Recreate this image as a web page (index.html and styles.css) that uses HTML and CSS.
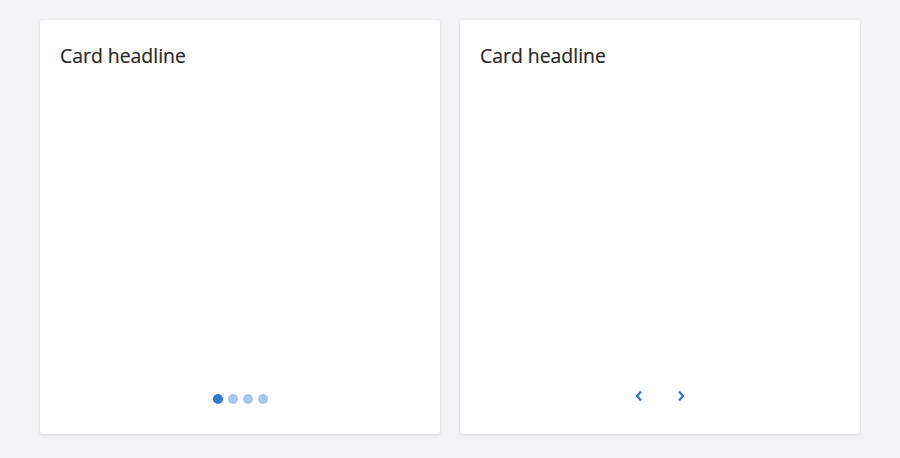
FILE: index.html
```html
<!DOCTYPE html>
<html>
<head>
<meta charset="utf-8">
<link rel="stylesheet" href="styles.css">
</head>
<body>
<div class="page">
  <div class="card">
    <h2 class="headline">Card headline</h2>
    <div class="footer">
      <div class="dots">
        <span class="dot active"></span>
        <span class="dot"></span>
        <span class="dot"></span>
        <span class="dot"></span>
      </div>
    </div>
  </div>
  <div class="card">
    <h2 class="headline">Card headline</h2>
    <div class="footer">
      <div class="arrows">
        <svg class="chev" width="8" height="12" viewBox="0 0 8 12"><path d="M6 1.5 L2 6 L6 10.5" fill="none" stroke="#2a7ad2" stroke-width="2.2"/></svg>
        <svg class="chev" width="8" height="12" viewBox="0 0 8 12"><path d="M2 1.5 L6 6 L2 10.5" fill="none" stroke="#2a7ad2" stroke-width="2.2"/></svg>
      </div>
    </div>
  </div>
</div>
</body>
</html>
```

FILE: styles.css
```css
html, body {
  margin: 0;
  padding: 0;
  background: #f3f3f5;
  font-family: "Open Sans", "Noto Sans", sans-serif;
}
.page {
  display: flex;
  gap: 20px;
  padding: 20px 40px;
}
.card {
  width: 400px;
  height: 414px;
  box-sizing: border-box;
  background: #fff;
  border-radius: 2px;
  box-shadow: 0 1px 3px rgba(0,0,0,0.12), 0 0 1px rgba(0,0,0,0.08);
  padding: 23px 20px 0;
  display: flex;
  flex-direction: column;
}
.headline {
  margin: 0;
  font-size: 19.4px;
  line-height: 26px;
  font-weight: 400;
  color: #2a2928;
  -webkit-text-stroke: 0.2px #2a2928;
}
.footer {
  margin-top: auto;
  display: flex;
  justify-content: center;
}
.dots {
  display: flex;
  gap: 5px;
  padding-bottom: 30px;
}
.dot {
  width: 10px;
  height: 10px;
  border-radius: 50%;
  background: #a4c6f0;
}
.dot.active {
  background: #2a7ad2;
}
.arrows {
  display: flex;
  gap: 34px;
  padding-bottom: 32px;
}
.chev {
  display: block;
}
```
